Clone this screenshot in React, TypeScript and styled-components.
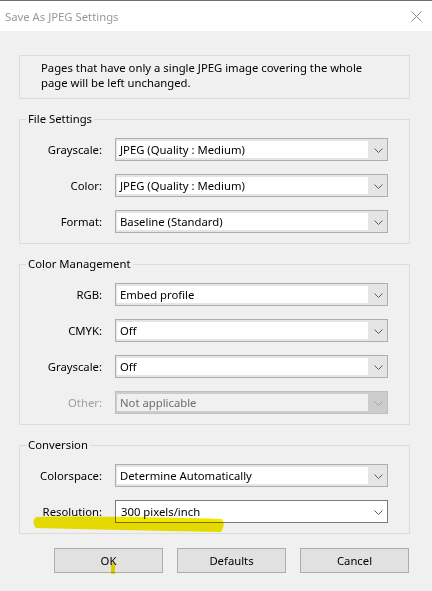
import styled, { createGlobalStyle } from 'styled-components';

const GlobalStyle = createGlobalStyle`
  html, body {
    margin: 0;
    padding: 0;
    background: #f0f0f0;
  }
  body {
    font-family: "Noto Sans", "Liberation Sans", sans-serif;
    font-size: 11.3px;
    color: #000;
  }
`;

const Window = styled.div`
  position: relative;
  width: 432px;
  height: 591px;
  background: #f0f0f0;
  display: flex;
  flex-direction: column;
  overflow: hidden;
`;

const TitleBar = styled.div`
  height: 31px;
  box-sizing: border-box;
  border-top: 1px solid #707070;
  background: #fff;
  display: flex;
  align-items: center;
  justify-content: space-between;
  padding: 0 10px 0 5px;
  color: #999;
`;

const Body = styled.div`
  display: flex;
  flex-direction: column;
  padding: 24px 22px 0 19px;
`;

const InfoBox = styled.div`
  border: 1px solid #dcdcdc;
  padding: 4px 0 8px 21px;
  line-height: 15px;
`;

const Group = styled.fieldset`
  margin: 13px 0 0;
  padding: 0 0 10px;
  border: 1px solid #dcdcdc;
  min-width: 0;
`;

const Legend = styled.legend`
  margin-left: 6px;
  padding: 0 2px;
  line-height: 14px;
`;

const Rows = styled.div`
  display: flex;
  flex-direction: column;
  gap: 13px;
  padding-top: 12px;
`;

const Row = styled.div`
  display: grid;
  grid-template-columns: 82px 273px;
  column-gap: 13px;
  align-items: center;
`;

const Label = styled.span<{ $disabled?: boolean }>`
  text-align: right;
  color: ${({ $disabled }) => ($disabled ? '#a0a0a0' : '#000')};
`;

type Variant = 'list' | 'edit' | 'disabled';

const Combo = styled.div<{ $variant: Variant }>`
  height: 23px;
  box-sizing: border-box;
  display: flex;
  border: 1px solid
    ${({ $variant }) =>
      $variant === 'edit' ? '#7a7a7a' : $variant === 'disabled' ? '#bfbfbf' : '#adadad'};
  background: ${({ $variant }) =>
    $variant === 'edit' ? '#fff' : $variant === 'disabled' ? '#cccccc' : '#e5e5e5'};
`;

const Field = styled.div<{ $variant: Variant }>`
  flex: 1;
  display: flex;
  align-items: center;
  margin: ${({ $variant }) => ($variant === 'edit' ? '0' : '2px 0 2px 1px')};
  padding-left: ${({ $variant }) => ($variant === 'edit' ? '5px' : '3px')};
  background: ${({ $variant }) => ($variant === 'disabled' ? '#f0f0f0' : '#fff')};
  color: ${({ $variant }) => ($variant === 'disabled' ? '#6d6d6d' : '#000')};
  white-space: nowrap;
`;

const Arrow = styled.div`
  width: 19px;
  display: flex;
  align-items: center;
  justify-content: center;
  padding: 2px 0 0 2px;
  box-sizing: border-box;
`;

const ButtonRow = styled.div`
  display: flex;
  gap: 14px;
  margin-top: 14px;
  padding-left: 35px;
`;

const Button = styled.button`
  width: 109px;
  height: 25px;
  border: 1px solid #adadad;
  background: #e1e1e1;
  font: inherit;
  color: #000;
  padding: 0;
`;

const Annotation = styled.svg`
  position: absolute;
  left: 0;
  top: 0;
  pointer-events: none;
  mix-blend-mode: multiply;
`;

const Chevron = ({ disabled }: { disabled?: boolean }) => (
  <svg width="9" height="5" viewBox="0 0 9 5">
    <path
      d="M0.5 0.5 L4.5 4.5 L8.5 0.5"
      fill="none"
      stroke={disabled ? '#a8a8a8' : '#5a5a5a'}
      strokeWidth="1"
    />
  </svg>
);

const Select = ({ value, variant = 'list' }: { value: string; variant?: Variant }) => (
  <Combo $variant={variant}>
    <Field $variant={variant}>{value}</Field>
    <Arrow>
      <Chevron disabled={variant === 'disabled'} />
    </Arrow>
  </Combo>
);

type Setting = { label: string; value: string; variant?: Variant };

const groups: { title: string; rows: Setting[] }[] = [
  {
    title: 'File Settings',
    rows: [
      { label: 'Grayscale:', value: 'JPEG (Quality : Medium)' },
      { label: 'Color:', value: 'JPEG (Quality : Medium)' },
      { label: 'Format:', value: 'Baseline (Standard)' },
    ],
  },
  {
    title: 'Color Management',
    rows: [
      { label: 'RGB:', value: 'Embed profile' },
      { label: 'CMYK:', value: 'Off' },
      { label: 'Grayscale:', value: 'Off' },
      { label: 'Other:', value: 'Not applicable', variant: 'disabled' },
    ],
  },
  {
    title: 'Conversion',
    rows: [
      { label: 'Colorspace:', value: 'Determine Automatically' },
      { label: 'Resolution:', value: '300 pixels/inch', variant: 'edit' },
    ],
  },
];

export default function App() {
  return (
    <Window>
      <GlobalStyle />
      <TitleBar>
        <span>Save As JPEG Settings</span>
        <svg width="11" height="11" viewBox="0 0 11 11">
          <path d="M0.5 0.5 L10.5 10.5 M10.5 0.5 L0.5 10.5" stroke="#8a8a8a" strokeWidth="1" />
        </svg>
      </TitleBar>
      <Body>
        <InfoBox>
          Pages that have only a single JPEG image covering the whole
          <br />
          page will be left unchanged.
        </InfoBox>
        {groups.map((g) => (
          <Group key={g.title}>
            <Legend>{g.title}</Legend>
            <Rows>
              {g.rows.map((r) => (
                <Row key={r.label + r.value}>
                  <Label $disabled={r.variant === 'disabled'}>{r.label}</Label>
                  <Select value={r.value} variant={r.variant} />
                </Row>
              ))}
            </Rows>
          </Group>
        ))}
        <ButtonRow>
          <Button>OK</Button>
          <Button>Defaults</Button>
          <Button>Cancel</Button>
        </ButtonRow>
      </Body>
      {/* highlighter marks drawn over the dialog */}
      <Annotation width="432" height="591" viewBox="0 0 432 591">
        <path
          d="M36 517 C80 516 150 517 222 519 Q226 525 221 532 C150 531 90 529 36 528 Q31 522 36 517 Z"
          fill="#f3e700"
        />
        <rect x="111" y="563" width="4" height="11" fill="#f3e700" />
      </Annotation>
    </Window>
  );
}
